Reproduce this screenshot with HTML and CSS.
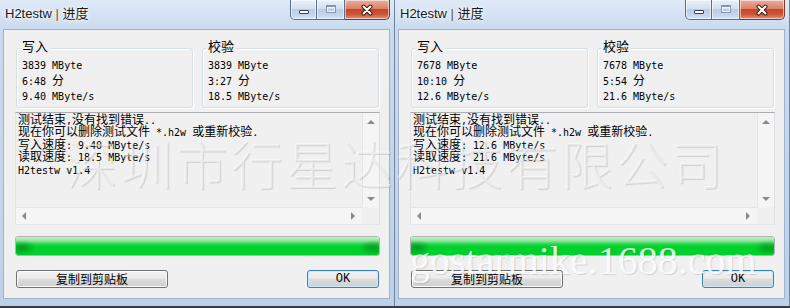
FILE: index.html
```html
<!DOCTYPE html>
<html lang="zh-CN">
<head>
  <meta charset="UTF-8">
  <title>H2testw | 进度</title>
  <link rel="stylesheet" href="styles.css">
</head>
<body>
<div class="desktop">
  <!-- 左边窗口 -->
  <div class="window">
    <div class="title-bar">
      <span class="title">H2testw <span class="sep">|</span> 进度</span>
      <div class="caption-btns">
        <div class="cap-btn cap-min"><span class="min-icon"></span></div>
        <div class="cap-btn cap-max"><span class="max-icon"></span></div>
        <div class="cap-btn cap-close">
          <svg width="14" height="12" viewBox="0 0 14 12"><path d="M3.5 2.5 L10.5 9.5 M10.5 2.5 L3.5 9.5" stroke="#3a1c16" stroke-width="4" stroke-linecap="round"/><path d="M3.5 2.5 L10.5 9.5 M10.5 2.5 L3.5 9.5" stroke="#fff" stroke-width="2" stroke-linecap="round"/></svg>
        </div>
      </div>
    </div>
    <div class="client">
      <div class="groups">
        <div class="group">
          <div class="group-label">写入</div>
          <div class="group-values">
            <div>3839 MByte</div>
            <div>6:48 <span class="cn">分</span></div>
            <div>9.40 MByte/s</div>
          </div>
        </div>
        <div class="group">
          <div class="group-label">校验</div>
          <div class="group-values">
            <div>3839 MByte</div>
            <div>3:27 <span class="cn">分</span></div>
            <div>18.5 MByte/s</div>
          </div>
        </div>
      </div>
      <div class="log">
        <div class="log-text">
          <div><span class="cn">测试结束</span>,<span class="cn">没有找到错误</span>..</div>
          <div><span class="cn">现在你可以删除测试文件</span> *.h2w <span class="cn">或重新校验</span>.</div>
          <div><span class="cn">写入速度</span>: 9.40 MByte/s</div>
          <div><span class="cn">读取速度</span>: 18.5 MByte/s</div>
          <div>H2testw v1.4</div>
        </div>
        <div class="vscroll"><span class="arrow up"></span><span class="arrow down"></span></div>
        <div class="hscroll"><span class="arrow left"></span><span class="arrow right"></span></div>
        <div class="corner"></div>
      </div>
      <div class="progress"><div class="progress-fill"></div></div>
      <div class="buttons">
        <div class="btn btn-copy">复制到剪贴板</div>
        <div class="btn btn-ok">OK</div>
      </div>
    </div>
  </div>

  <!-- 右边窗口 -->
  <div class="window">
    <div class="title-bar">
      <span class="title">H2testw <span class="sep">|</span> 进度</span>
      <div class="caption-btns">
        <div class="cap-btn cap-min"><span class="min-icon"></span></div>
        <div class="cap-btn cap-max"><span class="max-icon"></span></div>
        <div class="cap-btn cap-close">
          <svg width="14" height="12" viewBox="0 0 14 12"><path d="M3.5 2.5 L10.5 9.5 M10.5 2.5 L3.5 9.5" stroke="#3a1c16" stroke-width="4" stroke-linecap="round"/><path d="M3.5 2.5 L10.5 9.5 M10.5 2.5 L3.5 9.5" stroke="#fff" stroke-width="2" stroke-linecap="round"/></svg>
        </div>
      </div>
    </div>
    <div class="client">
      <div class="groups">
        <div class="group">
          <div class="group-label">写入</div>
          <div class="group-values">
            <div>7678 MByte</div>
            <div>10:10 <span class="cn">分</span></div>
            <div>12.6 MByte/s</div>
          </div>
        </div>
        <div class="group">
          <div class="group-label">校验</div>
          <div class="group-values">
            <div>7678 MByte</div>
            <div>5:54 <span class="cn">分</span></div>
            <div>21.6 MByte/s</div>
          </div>
        </div>
      </div>
      <div class="log">
        <div class="log-text">
          <div><span class="cn">测试结束</span>,<span class="cn">没有找到错误</span>..</div>
          <div><span class="cn">现在你可以删除测试文件</span> *.h2w <span class="cn">或重新校验</span>.</div>
          <div><span class="cn">写入速度</span>: 12.6 MByte/s</div>
          <div><span class="cn">读取速度</span>: 21.6 MByte/s</div>
          <div>H2testw v1.4</div>
        </div>
        <div class="vscroll"><span class="arrow up"></span><span class="arrow down"></span></div>
        <div class="hscroll"><span class="arrow left"></span><span class="arrow right"></span></div>
        <div class="corner"></div>
      </div>
      <div class="progress"><div class="progress-fill"></div></div>
      <div class="buttons">
        <div class="btn btn-copy">复制到剪贴板</div>
        <div class="btn btn-ok">OK</div>
      </div>
    </div>
  </div>
</div>

<!-- 水印 -->
<div class="watermark-cn">深圳市行星达科技有限公司</div>
<div class="watermark-url">gostarmike.1688.com</div>
</body>
</html>
```

FILE: styles.css
```css
* {
  margin: 0;
  padding: 0;
  box-sizing: border-box;
}

body {
  width: 790px;
  height: 308px;
  overflow: hidden;
  position: relative;
  background-color: #3c3c3c;
  font-family: "DejaVu Sans Mono", "Noto Sans CJK SC", monospace;
  font-size: 10px;
  color: #000;
}

/* 中文部分单独用 12px, 行高压小免得撑开行 */
.cn {
  font-family: "Noto Sans CJK SC", sans-serif;
  font-size: 12px;
  line-height: 8px;
}

.desktop {
  display: flex;
}

/* 窗口边框 */
.window {
  width: 395px;
  height: 306px;
  flex-shrink: 0;
  display: flex;
  flex-direction: column;
  background: linear-gradient(#dfeaf7, #c9dbef 30px, #bcd1ea);
  border-right: 1px solid #71859f;
}

/* 标题栏 */
.title-bar {
  height: 29px;
  display: flex;
  align-items: flex-start;
}

.title {
  margin: 6px 0 0 5px;
  font: 13px/16px "Liberation Sans", "Noto Sans CJK SC", sans-serif;
  color: #1a1a1a;
  text-shadow: 0 0 6px #fff, 0 0 3px #fff;
}

.title .sep {
  color: #7a5220;
}

.caption-btns {
  margin-left: auto;
  margin-right: 4px;
  display: flex;
}

.cap-btn {
  height: 20px;
  display: flex;
  align-items: center;
  justify-content: center;
  border: 1px solid #5b6f8c;
  border-top: 0;
  border-left-width: 0;
  background: linear-gradient(#e9f0f9, #d3e0f0 45%, #b9cde6 50%, #c7d8ee 85%, #dbe7f6);
  box-shadow: inset 0 0 0 1px rgba(255, 255, 255, 0.55);
}

.cap-min {
  width: 27px;
  border-left-width: 1px;
  border-bottom-left-radius: 5px;
}

.cap-max {
  width: 28px;
}

.cap-close {
  width: 45px;
  border-color: #7d3a2c;
  border-bottom-right-radius: 5px;
  background: linear-gradient(#eab0a1, #dc8168 45%, #c7442b 50%, #cc5536 75%, #e39379);
}

.min-icon {
  width: 10px;
  height: 4px;
  margin-top: 5px;
  background: #fff;
  border: 1px solid #2f3f5c;
  border-radius: 1px;
}

.max-icon {
  width: 10px;
  height: 8px;
  margin-top: -1px;
  border: 1px solid #8896ad;
  border-top-width: 2px;
  box-shadow: inset 0 0 0 1px #eef3f9;
}

/* 客户区 */
.client {
  margin: 0 4px 0 3px;
  height: 270px;
  padding-left: 11px;
  background-color: #f0f0f0;
  border: 1px solid #9fb3cb;
}

.groups {
  display: flex;
  gap: 9px;
  margin: 18px 0 0 1px;
}

.group {
  width: 177px;
  height: 60px;
  padding-left: 5px;
  border: 1px solid #d5dfe5;
  border-radius: 3px;
  box-shadow: inset 1px 1px 0 #fff, 1px 1px 0 #fff;
}

.group-label {
  width: max-content;
  margin: -11px 0 0 -2px;
  padding: 0 2px;
  background-color: #f0f0f0;
  font: 13px/16px "Noto Sans CJK SC", sans-serif;
}

.group-values {
  margin-top: 4px;
}

.group-values div {
  height: 15.7px;
  line-height: 15.5px;
  white-space: pre;
}

/* 日志文本框 */
.log {
  width: 365px;
  height: 113px;
  margin-top: 4px;
  display: grid;
  grid-template-columns: 1fr 17px;
  grid-template-rows: 1fr 17px;
  border: 1px solid;
  border-color: #abadb3 #dbdfe6 #e3e9ef #e2e3ea;
  background-color: #f0f0f0;
}

.log-text {
  padding: 1px 0 0 2px;
}

.log-text div {
  height: 12.4px;
  line-height: 13px;
  white-space: pre;
}

.vscroll {
  display: flex;
  flex-direction: column;
  justify-content: space-between;
  align-items: center;
  padding: 7px 0 6px;
  background-color: #f5f5f5;
  border-left: 1px solid #e4e4e4;
}

.hscroll {
  display: flex;
  justify-content: space-between;
  align-items: center;
  padding: 0 7px 0 6px;
  background-color: #f5f5f5;
  border-top: 1px solid #e4e4e4;
}

.corner {
  background-color: #f0f0f0;
}

.arrow {
  width: 0;
  height: 0;
  border: 4px solid transparent;
}

.arrow.up {
  border-top-width: 0;
  border-bottom-color: #8a8a8a;
}

.arrow.down {
  border-bottom-width: 0;
  border-top-color: #8a8a8a;
}

.arrow.left {
  border-left-width: 0;
  border-right-color: #8a8a8a;
}

.arrow.right {
  border-right-width: 0;
  border-left-color: #8a8a8a;
}

/* 进度条 */
.progress {
  width: 365px;
  height: 20px;
  margin-top: 11px;
  border: 1px solid #b4b4b4;
  border-radius: 3px;
  background-color: #e6e6e6;
  overflow: hidden;
}

.progress-fill {
  width: 100%;
  height: 100%;
  background:
    radial-gradient(ellipse 14px 8px at 6px 60%, rgba(0, 100, 20, 0.5), rgba(0, 100, 20, 0)),
    radial-gradient(ellipse 14px 8px at calc(100% - 6px) 60%, rgba(0, 100, 20, 0.45), rgba(0, 100, 20, 0)),
    linear-gradient(#c4f1c8 0%, #8de49a 22%, #1dd744 40%, #00d12d 55%, #00d02c 100%);
}

/* 按钮 */
.buttons {
  width: 365px;
  margin-top: 14px;
  padding: 0 1px;
  display: flex;
  justify-content: space-between;
}

.btn {
  height: 18px;
  display: flex;
  align-items: center;
  justify-content: center;
  border: 1px solid #707070;
  border-radius: 3px;
  background: linear-gradient(#f2f2f2, #ebebeb 45%, #dddddd 50%, #cfcfcf);
  box-shadow: inset 0 0 0 1px #fcfcfc;
  font: 12px/16px "Noto Sans CJK SC", sans-serif;
}

.btn-copy {
  width: 152px;
}

.btn-ok {
  width: 72px;
  border-color: #3c7fb1;
  box-shadow: inset 0 0 0 1px #c6ecfb;
  font: 12px/16px "Liberation Mono", monospace;
}

/* 水印 */
.watermark-cn {
  position: absolute;
  left: 66px;
  top: 137px;
  font: 300 52px/52px "Noto Sans CJK SC", sans-serif;
  letter-spacing: 3px;
  white-space: nowrap;
  color: rgba(255, 255, 255, 0.5);
  text-shadow: 1px 1px 1px rgba(0, 0, 0, 0.13);
}

.watermark-url {
  position: absolute;
  left: 410px;
  top: 241px;
  font: 40px/40px "Liberation Serif", serif;
  white-space: nowrap;
  color: rgba(255, 255, 255, 0.85);
  text-shadow: 1px 1px 1px rgba(0, 0, 0, 0.12);
}
```
